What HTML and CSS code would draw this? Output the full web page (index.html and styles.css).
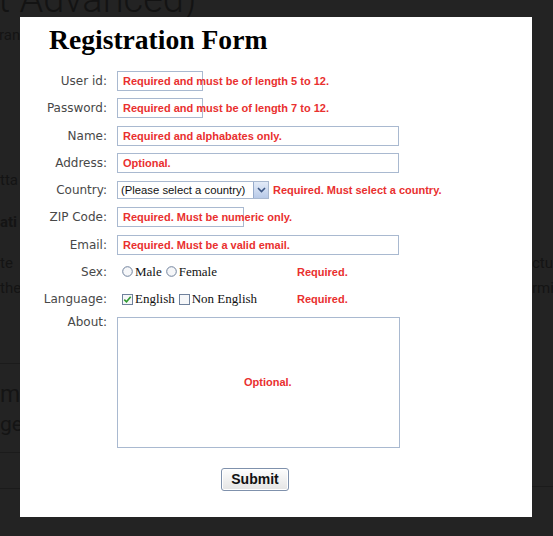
FILE: index.html
```html
<!DOCTYPE html>
<html>
<head>
<meta charset="utf-8">
<link rel="stylesheet" href="styles.css">
</head>
<body>
<div class="page">
  <div class="bg-title"><div class="bg-title-text">t Advanced)</div></div>
  <div class="stage">
    <div class="side side-left">
      <div class="bt l1">ran</div>
      <div class="bt l2">tta</div>
      <div class="bt l3 bold">ati</div>
      <div class="bt l4">te</div>
      <div class="bt l5">the</div>
      <div class="rule r1"></div>
      <div class="bt big l6">m</div>
      <div class="bt big2">ge</div>
      <div class="rule r2"></div>
      <div class="rule r3"></div>
    </div>
    <div class="modal">
      <h1 class="title">Registration Form</h1>
      <div class="form">
        <div class="label">User id:</div>
        <div class="cell"><div class="box w-short">Required and must be of length 5 to 12.</div></div>

        <div class="label">Password:</div>
        <div class="cell"><div class="box w-short">Required and must be of length 7 to 12.</div></div>

        <div class="label">Name:</div>
        <div class="cell"><div class="box w-long">Required and alphabates only.</div></div>

        <div class="label">Address:</div>
        <div class="cell"><div class="box w-long">Optional.</div></div>

        <div class="label">Country:</div>
        <div class="cell">
          <div class="select">
            <span class="select-text">(Please select a country)</span>
            <span class="select-btn">
              <svg width="9" height="6" viewBox="0 0 9 6"><path d="M1 1 L4.5 4.5 L8 1" fill="none" stroke="#3d5784" stroke-width="1.6"/></svg>
            </span>
          </div>
          <span class="msg msg-country">Required. Must select a country.</span>
        </div>

        <div class="label">ZIP Code:</div>
        <div class="cell"><div class="box w-zip">Required. Must be numeric only.</div></div>

        <div class="label">Email:</div>
        <div class="cell"><div class="box w-long">Required. Must be a valid email.</div></div>

        <div class="label">Sex:</div>
        <div class="cell">
          <div class="opts">
            <svg class="ctl" width="11" height="11" viewBox="0 0 11 11"><circle cx="5.5" cy="5.5" r="4.8" fill="#f6f7f9" stroke="#6f819c" stroke-width="1"/></svg>
            <span class="opt">Male</span>
            <svg class="ctl ctl2" width="11" height="11" viewBox="0 0 11 11"><circle cx="5.5" cy="5.5" r="4.8" fill="#f6f7f9" stroke="#6f819c" stroke-width="1"/></svg>
            <span class="opt">Female</span>
          </div>
          <span class="msg">Required.</span>
        </div>

        <div class="label">Language:</div>
        <div class="cell">
          <div class="opts">
            <svg class="ctl" width="11" height="11" viewBox="0 0 11 11"><rect x="0.5" y="0.5" width="10" height="10" fill="#f6f7f9" stroke="#6f819c"/><path d="M2.3 5.6 L4.5 7.8 L8.7 2.8" fill="none" stroke="#2f9a2f" stroke-width="1.6"/></svg>
            <span class="opt">English</span>
            <svg class="ctl ctl3" width="11" height="11" viewBox="0 0 11 11"><rect x="0.5" y="0.5" width="10" height="10" fill="#f6f7f9" stroke="#6f819c"/></svg>
            <span class="opt">Non English</span>
          </div>
          <span class="msg">Required.</span>
        </div>

        <div class="label label-top">About:</div>
        <div class="cell cell-top"><div class="area"><span class="msg">Optional.</span></div></div>

        <div class="cell submit-cell"><button class="submit" type="button">Submit</button></div>
      </div>
    </div>
    <div class="side side-right">
      <div class="bt l4r">ctu</div>
      <div class="bt l5">rmi</div>
      <div class="rule r3r"></div>
    </div>
  </div>
</div>
</body>
</html>
```
FILE: styles.css
```css
html, body {
  margin: 0;
  padding: 0;
}
body {
  background: #232323;
  width: 553px;
  height: 536px;
  overflow: hidden;
}
.page {
  width: 553px;
  height: 536px;
  overflow: hidden;
}
.bg-title {
  height: 17px;
  overflow: hidden;
}
.bg-title-text {
  margin-top: -21px;
  margin-left: -2px;
  font-family: Roboto, "Liberation Sans", sans-serif;
  font-weight: 300;
  font-size: 38px;
  line-height: 40px;
  color: #131313;
  white-space: nowrap;
}
.stage {
  display: flex;
  height: 519px;
}
.side {
  overflow: hidden;
  font-family: Roboto, "Liberation Sans", sans-serif;
  font-size: 15px;
  color: #141414;
  white-space: nowrap;
}
.side-left {
  width: 20px;
}
.side-right {
  width: 21px;
}
.bt {
  line-height: 20px;
  height: 20px;
}
.l1 { margin-top: 8px; margin-left: -1px; }
.l2 { margin-top: 125px; }
.l3 { margin-top: 22px; }
.bold { font-weight: 700; }
.l4 { margin-top: 21px; }
.l5 { margin-top: 5px; }
.l4r { margin-top: 236px; }
.rule {
  height: 0;
  border-top: 1px solid #1b1b1b;
}
.r1 { margin-top: 65px; }
.big {
  font-size: 23px;
  line-height: 30px;
  height: 30px;
  margin-top: 16px;
}
.big2 {
  font-size: 21px;
  line-height: 28px;
  height: 28px;
}
.r2 { margin-top: 14px; }
.r3 { margin-top: 35px; }
.r3r { margin-top: 188px; }

.modal {
  width: 512px;
  height: 500px;
  background: #ffffff;
  box-sizing: border-box;
  padding-top: 7px;
  flex: none;
}
.title {
  margin: 0;
  padding-left: 29px;
  font-family: "Liberation Serif", "Times New Roman", serif;
  font-weight: 700;
  font-size: 27.6px;
  line-height: 32px;
  color: #000;
}
.form {
  margin-top: 11.5px;
  display: grid;
  grid-template-columns: 87px 1fr;
  column-gap: 10px;
  grid-template-rows: repeat(9, 27.25px) auto auto;
  align-items: center;
}
.label {
  text-align: right;
  font-family: "DejaVu Sans", Verdana, sans-serif;
  font-size: 12px;
  line-height: 14px;
  color: #484848;
}
.label-top {
  align-self: start;
  margin-top: 2px;
}
.cell {
  display: flex;
  align-items: center;
}
.cell-top {
  align-self: start;
}
.box {
  box-sizing: border-box;
  height: 20px;
  border: 1px solid #a9b9d0;
  padding-left: 5px;
  font-family: "Liberation Sans", Arial, sans-serif;
  font-weight: 700;
  font-size: 11px;
  line-height: 18px;
  color: #e9302f;
  white-space: nowrap;
  overflow: visible;
}
.w-short { width: 86px; }
.w-long { width: 282px; }
.w-zip { width: 127px; }
.msg {
  font-family: "Liberation Sans", Arial, sans-serif;
  font-weight: 700;
  font-size: 11px;
  line-height: 14px;
  color: #e9302f;
  white-space: nowrap;
}
.select {
  box-sizing: border-box;
  width: 152px;
  height: 18px;
  border: 1px solid #a9b9d0;
  display: flex;
  align-items: stretch;
}
.select-text {
  padding-left: 3px;
  font-family: "Liberation Sans", Arial, sans-serif;
  font-size: 11.3px;
  line-height: 16px;
  color: #111;
  white-space: nowrap;
}
.select-btn {
  margin-left: auto;
  width: 15px;
  box-sizing: border-box;
  border-left: 1px solid #97abcb;
  background: linear-gradient(#e3ebf8, #b8cae8);
  display: flex;
  align-items: center;
  justify-content: center;
}
.msg-country {
  margin-left: 4px;
}
.opts {
  width: 180px;
  display: flex;
  align-items: center;
}
.ctl {
  margin-left: 5px;
  flex: none;
}
.ctl2 { margin-left: 4px; }
.ctl3 { margin-left: 4px; }
.opt {
  margin-left: 2px;
  font-family: "Liberation Serif", "Times New Roman", serif;
  font-size: 13px;
  line-height: 16px;
  color: #111;
  white-space: nowrap;
}
.area {
  margin-top: 4px;
  box-sizing: border-box;
  width: 283px;
  height: 131px;
  border: 1px solid #a9b9d0;
  display: flex;
  align-items: center;
  padding-left: 126px;
}
.submit-cell {
  grid-column: 2;
  padding-top: 20px;
}
.submit {
  margin-left: 104px;
  width: 68px;
  height: 23px;
  padding: 0;
  box-sizing: border-box;
  border: 1px solid #7f91ac;
  border-radius: 3px;
  box-shadow: inset 0 0 0 1px #ffffff;
  background: linear-gradient(#fdfdfd, #e4e4e4);
  font-family: "Liberation Sans", Arial, sans-serif;
  font-weight: 700;
  font-size: 14px;
  color: #111;
}
```
